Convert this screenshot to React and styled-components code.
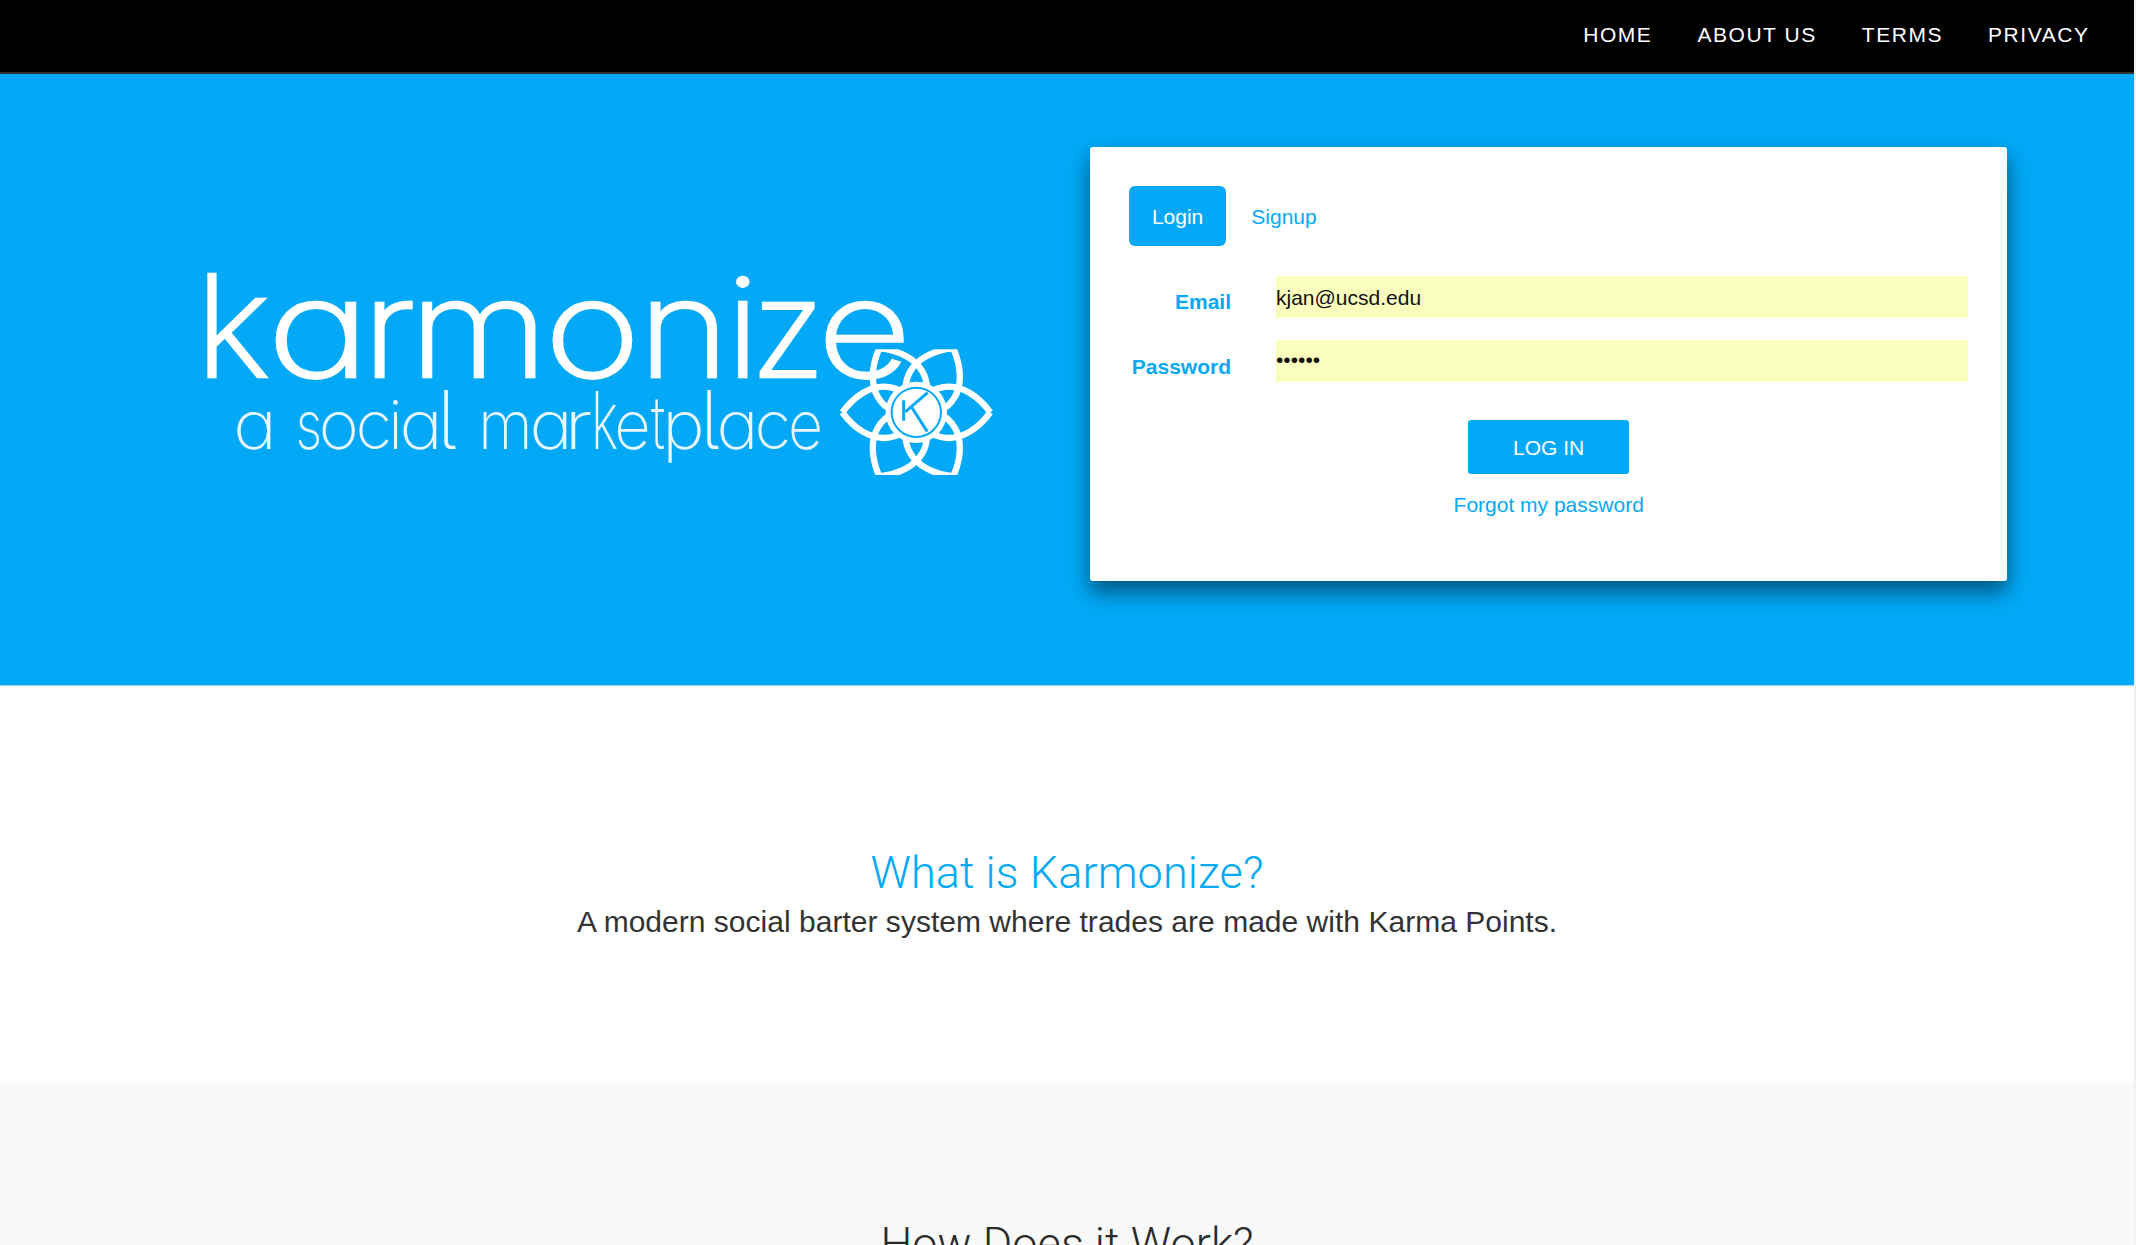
import React from "react";
import styled, { createGlobalStyle } from "styled-components";

const BLUE = "#03a9f7";

const GlobalStyle = createGlobalStyle`
  *, *::before, *::after { box-sizing: border-box; }
  html, body { margin: 0; padding: 0; }
  body {
    height: 1245px;
    overflow: hidden;
    background: #fff;
    color: #333;
    font-family: "Liberation Sans", Arial, sans-serif;
    font-size: 21px;
    line-height: 30px;
  }
`;

const Page = styled.div`
  width: 100%;
  height: 1245px;
  overflow: hidden;
  border-right: 2px solid #f1f1f1;
`;

const NavBar = styled.nav`
  display: flex;
  justify-content: flex-end;
  height: 74px;
  padding: 20px 22px 0 0;
  background: #000;
  border-bottom: 2px solid #33332f;
`;

const NavLink = styled.a`
  padding: 0 22.5px;
  color: #fff;
  letter-spacing: 1.55px;
  text-transform: uppercase;
  text-decoration: none;
`;

const Hero = styled.header`
  display: grid;
  grid-template-columns: 1090px 917px;
  align-items: start;
  height: 612px;
  padding-top: 73px;
  background: ${BLUE};
  border-bottom: 1px solid #9bd9f7;
`;

const Logo = styled.svg`
  display: block;
  margin: 103px 0 0 190px;
  overflow: visible;
`;

const Wordmark = styled.text`
  fill: #fff;
  stroke: #fff;
  stroke-width: 2.6px;
  font-family: Inter, sans-serif;
  font-size: 136px;
  font-weight: 200;
  font-feature-settings: "cv11";
`;

const Tagline = styled.text`
  fill: #e9f7ff;
  font-family: Inter, sans-serif;
  font-size: 67px;
  font-weight: 200;
  font-feature-settings: "cv11", "cv05";
`;

const Card = styled.section`
  height: 433.5px;
  padding: 39px 39px 0 39.4px;
  background: #fff;
  border-radius: 3px;
  box-shadow: 0 12px 24px rgba(0, 0, 0, 0.3), 0 9px 18px rgba(0, 0, 0, 0.25);
`;

const Tabs = styled.div`
  display: flex;
  gap: 3px;
  margin-bottom: 30px;
`;

const Tab = styled.a`
  height: 60px;
  padding: 0 22.5px;
  line-height: 62px;
  border-radius: 6px;
  color: ${(p) => (p.$active ? "#fff" : BLUE)};
  background: ${(p) => (p.$active ? BLUE : "transparent")};
`;

const FieldRow = styled.div`
  display: grid;
  grid-template-columns: 101.6px 692px;
  column-gap: 45px;
  height: 42px;
  margin-bottom: 22.3px;
`;

const FieldLabel = styled.label`
  padding-top: 11.3px;
  color: ${BLUE};
  font-weight: 700;
  text-align: right;
`;

const Input = styled.input`
  width: 100%;
  height: 42px;
  padding: ${(p) => (p.type === "password" ? "0 0 2px" : "1px 0 0")};
  border: 0;
  outline: 0;
  color: #111;
  background: #faffbd;
  font: inherit;
  border-radius: 0;
`;

const Actions = styled.div`
  display: flex;
  flex-direction: column;
  align-items: center;
  gap: 16px;
  padding-top: 15.4px;
`;

const SubmitButton = styled.button`
  width: 161px;
  height: 54px;
  padding: 2px 0 0;
  border: 0;
  border-radius: 3px;
  color: #fff;
  background: ${BLUE};
  font: inherit;
`;

const ForgotLink = styled.a`
  color: ${BLUE};
`;

const Intro = styled.section`
  height: 397px;
  padding-top: 160px;
  text-align: center;
`;

const Title = styled.h2`
  margin: 0;
  color: ${(p) => (p.$accent ? BLUE : "#2b2b2b")};
  font-family: Roboto, sans-serif;
  font-size: 45px;
  font-weight: 300;
  line-height: 54px;
  letter-spacing: 0.08px;
`;

const Lead = styled.p`
  margin: 0;
  color: #333;
  font-size: 30px;
  line-height: 43px;
  letter-spacing: 0.02px;
`;

const HowItWorks = styled.section`
  height: 162px;
  padding-top: 134px;
  background: #f9f9f9;
  text-align: center;
`;

const NAV = ["Home", "About us", "Terms", "Privacy"];

const PETAL =
  "M222 0C185 -50 140 -77 98 -77C70 -77 48 -66 35 -55M222 0C185 50 140 77 98 77C70 77 48 66 35 55";

// Each entry: letter, x origin, fitted advance width, optional font size.
const WORD = [
  ["k", 195.6, 74.6, 142], ["a", 266.9, 103.2], ["r", 362.3, 53.1],
  ["m", 409.2, 139.1], ["o", 544.5, 95.9], ["n", 638.2, 91.3],
  ["i", 726.1, 33.6, 138], ["z", 751, 74], ["e", 817.6, 93.7],
];

const TAG = [
  ["a", 232.9, 44], [" ", 272],
  ["s", 295.5, 26.7], ["o", 318.5, 40.5], ["c", 355.6, 36.6],
  ["i", 388, 15], ["a", 399.3, 43.6], ["l", 437, null, 81], [" ", 460],
  ["m", 478, 54.8], ["a", 529.3, 43.6], ["r", 564, 28.6],
  ["k", 590.9, 27.2, 80], ["e", 614.3, 36.5], ["t", 650.7, 14.4, 73],
  ["p", 662, 42.9], ["l", 700, null, 81], ["a", 716.3, 42.4],
  ["c", 754.6, 36.6], ["e", 787.9, 35.1],
];

function Letters({ items }) {
  return items.map(([ch, x, advance, size], i) => (
    <tspan
      key={i}
      x={x}
      fontSize={size}
      textLength={advance || undefined}
      lengthAdjust={advance ? "spacingAndGlyphs" : undefined}
    >
      {ch}
    </tspan>
  ));
}

function KarmonizeLogo() {
  return (
    <Logo width="820" height="240" viewBox="190 250 820 240" role="img" aria-label="karmonize, a social marketplace">
      <defs>
        <clipPath id="flower-edge">
          <rect x="-240" y="-189" width="480" height="377" />
        </clipPath>
      </defs>
      <Wordmark y="376.9">
        <Letters items={WORD} />
      </Wordmark>
      <Tagline y="448.8">
        <Letters items={TAG} />
      </Tagline>
      <g transform="translate(916.3 412.3) scale(0.33333)">
        <g clipPath="url(#flower-edge)" fill="none" stroke="#fff" strokeWidth="19">
          {[0, 60, 120, 180, 240, 300].map((a) => (
            <path key={a} d={PETAL} transform={`rotate(${a})`} />
          ))}
        </g>
        <circle r="92" fill="#fff" />
        <circle r="74" fill="none" stroke={BLUE} strokeWidth="6" />
        <path d="M-38 -36V25M34 -59L-33 -1M-14 -15L33 58" fill="none" stroke={BLUE} strokeWidth="9" />
      </g>
    </Logo>
  );
}

export default function App() {
  return (
    <>
      <GlobalStyle />
      <Page>
        <NavBar>
          {NAV.map((n) => (
            <NavLink key={n}>{n}</NavLink>
          ))}
        </NavBar>
        <Hero>
          <KarmonizeLogo />
          <Card>
            <Tabs>
              <Tab $active>Login</Tab>
              <Tab>Signup</Tab>
            </Tabs>
            <FieldRow>
              <FieldLabel htmlFor="email">Email</FieldLabel>
              <Input id="email" type="text" defaultValue="kjan@ucsd.edu" />
            </FieldRow>
            <FieldRow>
              <FieldLabel htmlFor="password">Password</FieldLabel>
              <Input id="password" type="password" defaultValue="secret" />
            </FieldRow>
            <Actions>
              <SubmitButton>LOG IN</SubmitButton>
              <ForgotLink>Forgot my password</ForgotLink>
            </Actions>
          </Card>
        </Hero>
        <Intro>
          <Title $accent>What is Karmonize?</Title>
          <Lead>A modern social barter system where trades are made with Karma Points.</Lead>
        </Intro>
        <HowItWorks>
          <Title>How Does it Work?</Title>
        </HowItWorks>
      </Page>
    </>
  );
}
